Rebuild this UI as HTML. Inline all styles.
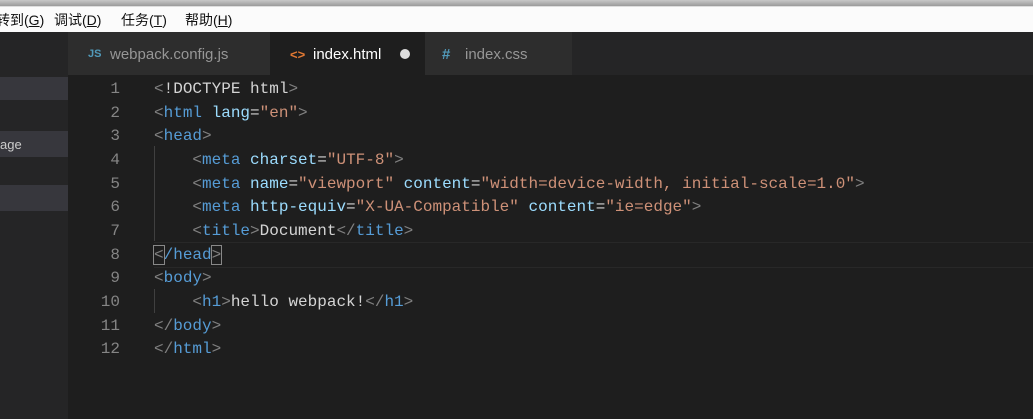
<!DOCTYPE html>
<html><head><style>
body{margin:0;width:1033px;height:419px;overflow:hidden;background:#1e1e1e;position:relative;font-family:"Liberation Sans","Noto Sans CJK SC",sans-serif}
.top{position:absolute;left:0;top:0;width:1033px;height:6px;background:linear-gradient(#c8c8c8,#9a9a9a)}
.menu{position:absolute;left:0;top:6px;width:1033px;height:26px;background:#fbfbfb;border-top:1px solid #ddd;font-size:14px;color:#111;line-height:27px}
.menu span{position:absolute;top:0}
.side{position:absolute;left:0;top:32px;width:68px;height:387px;background:#252526}
.side div{position:absolute;left:0;width:68px;background:#37373d;color:#ccc;font-size:13px;line-height:27px}
.tabs{position:absolute;left:68px;top:32px;width:965px;height:43px;background:#252526}
.tab{position:absolute;top:0;height:43px;line-height:45px;font-size:15px;color:#969696}
.code{position:absolute;left:68px;top:77px;width:965px;height:342px;font-family:"Liberation Mono",monospace;font-size:16px}
.ln{position:absolute;left:0;width:52px;text-align:right;color:#858585}
.l{position:absolute;left:86px;white-space:pre;color:#d4d4d4}
.t{color:#569cd6}.a{color:#9cdcfe}.s{color:#ce9178}.g{color:#808080}
</style></head><body>
<div class="top"></div>
<div class="menu"><span style="left:-4px">转到(<u>G</u>)</span><span style="left:54px">调试(<u>D</u>)</span><span style="left:121px">任务(<u>T</u>)</span><span style="left:185px">帮助(<u>H</u>)</span></div>
<div class="side"><div style="top:45px;height:23px"></div><div style="top:99px;height:26px">age</div><div style="top:153px;height:26px"></div></div>
<div class="tabs">
<div class="tab" style="left:0;width:202px;background:#2d2d2d"><span style="position:absolute;left:20px;color:#519aba;font-size:11px;font-weight:bold">JS</span><span style="position:absolute;left:42px">webpack.config.js</span></div>
<div class="tab" style="left:202px;width:155px;background:#1e1e1e;color:#fff"><span style="position:absolute;left:20px;color:#e37933;font-size:13px;font-weight:bold">&lt;&gt;</span><span style="position:absolute;left:43px">index.html</span><span style="position:absolute;left:130px;top:17px;width:10px;height:10px;border-radius:50%;background:#ddd"></span></div>
<div class="tab" style="left:357px;width:147px;background:#2d2d2d"><span style="position:absolute;left:17px;color:#519aba;font-weight:bold">#</span><span style="position:absolute;left:40px">index.css</span></div>
</div>
<div class="code">
<div style="position:absolute;left:86px;top:165px;width:879px;height:24px;border-top:1px solid #282828;border-bottom:1px solid #282828"></div>
<div style="position:absolute;left:86px;top:69px;width:1px;height:95px;background:#404040"></div>
<div style="position:absolute;left:86px;top:212px;width:1px;height:24px;background:#404040"></div>
<div class="ln" style="top:3px">1</div><div class="l" style="top:3px"><span class="g">&lt;</span>!DOCTYPE html<span class="g">&gt;</span></div>
<div class="ln" style="top:27px">2</div><div class="l" style="top:27px"><span class="g">&lt;</span><span class="t">html</span> <span class="a">lang</span>=<span class="s">"en"</span><span class="g">&gt;</span></div>
<div class="ln" style="top:50px">3</div><div class="l" style="top:50px"><span class="g">&lt;</span><span class="t">head</span><span class="g">&gt;</span></div>
<div class="ln" style="top:74px">4</div><div class="l" style="top:74px">    <span class="g">&lt;</span><span class="t">meta</span> <span class="a">charset</span>=<span class="s">"UTF-8"</span><span class="g">&gt;</span></div>
<div class="ln" style="top:98px">5</div><div class="l" style="top:98px">    <span class="g">&lt;</span><span class="t">meta</span> <span class="a">name</span>=<span class="s">"viewport"</span> <span class="a">content</span>=<span class="s">"width=device-width, initial-scale=1.0"</span><span class="g">&gt;</span></div>
<div class="ln" style="top:121px">6</div><div class="l" style="top:121px">    <span class="g">&lt;</span><span class="t">meta</span> <span class="a">http-equiv</span>=<span class="s">"X-UA-Compatible"</span> <span class="a">content</span>=<span class="s">"ie=edge"</span><span class="g">&gt;</span></div>
<div class="ln" style="top:145px">7</div><div class="l" style="top:145px">    <span class="g">&lt;</span><span class="t">title</span><span class="g">&gt;</span>Document<span class="g">&lt;/</span><span class="t">title</span><span class="g">&gt;</span></div>
<div class="ln" style="top:169px">8</div><div class="l" style="top:169px"><span class="g" style="outline:1px solid #888">&lt;</span><span class="t">/head</span><span class="g" style="outline:1px solid #888">&gt;</span></div>
<div class="ln" style="top:192px">9</div><div class="l" style="top:192px"><span class="g">&lt;</span><span class="t">body</span><span class="g">&gt;</span></div>
<div class="ln" style="top:216px">10</div><div class="l" style="top:216px">    <span class="g">&lt;</span><span class="t">h1</span><span class="g">&gt;</span>hello webpack!<span class="g">&lt;/</span><span class="t">h1</span><span class="g">&gt;</span></div>
<div class="ln" style="top:240px">11</div><div class="l" style="top:240px"><span class="g">&lt;/</span><span class="t">body</span><span class="g">&gt;</span></div>
<div class="ln" style="top:263px">12</div><div class="l" style="top:263px"><span class="g">&lt;/</span><span class="t">html</span><span class="g">&gt;</span></div>
</div>
</body></html>
